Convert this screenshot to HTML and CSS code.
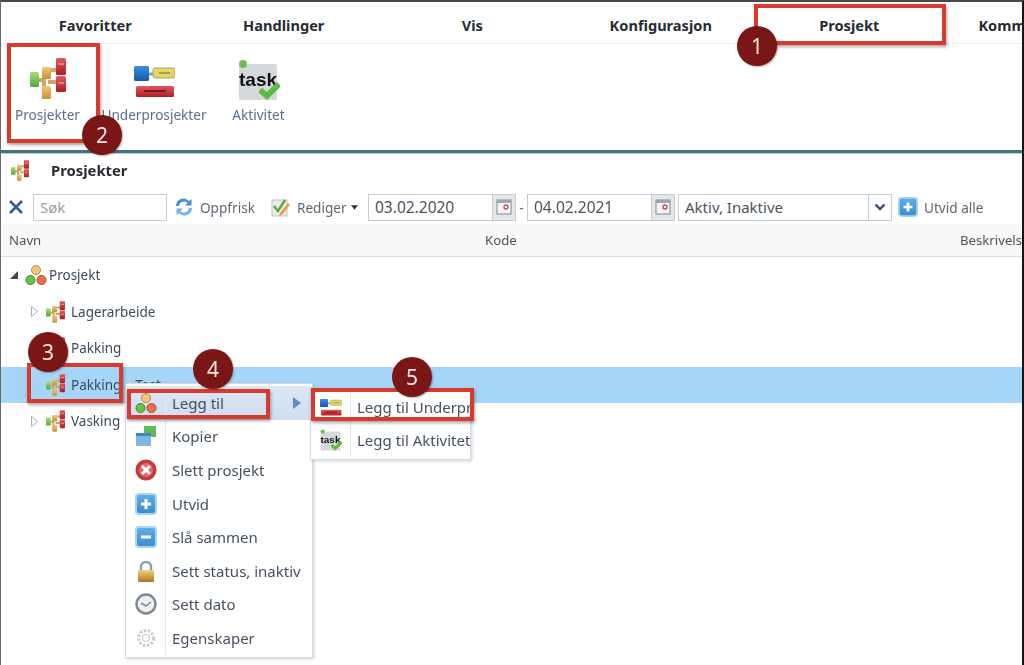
FILE: index.html
```html
<!DOCTYPE html>
<html lang="no">
<head>
<meta charset="utf-8">
<title>Prosjekter</title>
<link rel="stylesheet" href="styles.css">
</head>
<body>
<svg class="defs" aria-hidden="true">
  <defs>
    <linearGradient id="gRed" x1="0" y1="0" x2="0" y2="1"><stop offset="0" stop-color="#e2585c"/><stop offset="1" stop-color="#a91f26"/></linearGradient>
    <linearGradient id="gOr" x1="0" y1="0" x2="0" y2="1"><stop offset="0" stop-color="#f0c878"/><stop offset="1" stop-color="#c98f35"/></linearGradient>
    <linearGradient id="gGr" x1="0" y1="0" x2="0" y2="1"><stop offset="0" stop-color="#a5dc78"/><stop offset="1" stop-color="#58a83a"/></linearGradient>
    <linearGradient id="gBl" x1="0" y1="0" x2="0" y2="1"><stop offset="0" stop-color="#3d8ee0"/><stop offset="1" stop-color="#1557a8"/></linearGradient>
    <linearGradient id="gBtn" x1="0" y1="0" x2="0" y2="1"><stop offset="0" stop-color="#5fb0e6"/><stop offset="1" stop-color="#3a8ccb"/></linearGradient>
    <linearGradient id="gLock" x1="0" y1="0" x2="0" y2="1"><stop offset="0" stop-color="#f4d27a"/><stop offset="1" stop-color="#a8741f"/></linearGradient>
    <symbol id="i-proj" viewBox="0 0 36 41">
      <path d="M7 22H14M14 14V34M18 12H28M18 24H28" fill="none" stroke="#c9a76c" stroke-width="4"/>
      <rect x="0" y="14" width="9" height="15" rx="1.500" fill="url(#gGr)"/>
      <rect x="12" y="9" width="9" height="12" rx="1.500" fill="url(#gOr)"/>
      <rect x="12" y="28" width="9" height="13" rx="1.500" fill="url(#gOr)"/>
      <rect x="26" y="0" width="10" height="17" rx="1.500" fill="url(#gRed)"/>
      <rect x="26" y="18" width="10" height="16" rx="1.500" fill="url(#gRed)"/>
      <path d="M28 6H34M28 25H34" stroke="#f3c5c5" stroke-width="1.200"/>
    </symbol>
    <symbol id="i-sub" viewBox="0 0 41 32">
      <path d="M14 9H20" stroke="#8aa5b5" stroke-width="3"/>
      <rect x="0" y="1" width="15" height="15" rx="1.500" fill="url(#gBl)"/>
      <rect x="19" y="3" width="22" height="10" rx="2" fill="#e7d468" stroke="#a5a658"/>
      <path d="M25 8H36" stroke="#8b8a3a" stroke-width="1.400"/>
      <rect x="2" y="21" width="38" height="11" rx="1.500" fill="url(#gRed)"/>
      <path d="M10 26H32" stroke="#6e1215" stroke-width="1.600"/>
    </symbol>
    <symbol id="i-task" viewBox="0 0 42 40">
      <rect x="1" y="4" width="38" height="36" rx="2" fill="#d6d9dc"/>
      <circle cx="5" cy="4" r="4" fill="#6cc04a"/>
      <text x="20" y="26" text-anchor="middle" class="task-word">task</text>
      <path d="M22 30L29 36L41 24" fill="none" stroke="#5dbb3f" stroke-width="6"/>
    </symbol>
    <symbol id="i-root" viewBox="0 0 22 22">
      <circle cx="11" cy="6" r="4.500" fill="#f0c878" stroke="#b58a3a"/>
      <circle cx="5.500" cy="16" r="4.500" fill="#6cc04a" stroke="#3d8a2a"/>
      <circle cx="16.500" cy="16" r="4.500" fill="#e9704a" stroke="#b8472a"/>
    </symbol>
    <symbol id="i-copy" viewBox="0 0 22 22">
      <rect x="9" y="1" width="12" height="11" fill="#5fb85a"/>
      <rect x="1" y="8" width="15" height="13" fill="#7fb6dc"/>
      <rect x="1" y="8" width="15" height="3" fill="#3f88bd"/>
    </symbol>
    <symbol id="i-del" viewBox="0 0 22 22">
      <circle cx="11" cy="11" r="10.500" fill="#c23a3e"/>
      <circle cx="11" cy="11" r="7" fill="#e0686a"/>
      <path d="M7 7L15 15M15 7L7 15" stroke="#fff" stroke-width="3"/>
    </symbol>
    <symbol id="i-plus" viewBox="0 0 22 22">
      <rect x="1" y="1" width="20" height="20" rx="3" fill="url(#gBtn)" stroke="#a9d5f2" stroke-width="2"/>
      <path d="M11 6V16M6 11H16" stroke="#fff" stroke-width="3"/>
    </symbol>
    <symbol id="i-minus" viewBox="0 0 22 22">
      <rect x="1" y="1" width="20" height="20" rx="3" fill="url(#gBtn)" stroke="#a9d5f2" stroke-width="2"/>
      <path d="M6 11H16" stroke="#fff" stroke-width="3"/>
    </symbol>
    <symbol id="i-lock" viewBox="0 0 22 22">
      <path d="M6 11V7a5 5 0 0 1 10 0V11" fill="none" stroke="#8d9fb5" stroke-width="2.400"/>
      <rect x="3" y="10" width="16" height="12" rx="1" fill="url(#gLock)"/>
    </symbol>
    <symbol id="i-clock" viewBox="0 0 22 22">
      <circle cx="11" cy="11" r="9.500" fill="#eef1f4" stroke="#7f8791" stroke-width="2.400"/>
      <path d="M6 10L11 13L16 9" fill="none" stroke="#7f8791" stroke-width="1.500"/>
    </symbol>
    <symbol id="i-gear" viewBox="0 0 22 22">
      <circle cx="11" cy="11" r="7.500" fill="none" stroke="#c8ced4" stroke-width="3" stroke-dasharray="2.500 1.600"/>
      <circle cx="11" cy="11" r="3.500" fill="none" stroke="#c8ced4" stroke-width="1.200"/>
    </symbol>
    <symbol id="i-refresh" viewBox="0 0 20 20">
      <path d="M2 9A7.500 7.500 0 0 1 15 4L17.500 2V8.500H11L13.500 6A5 5 0 0 0 5 9Z" fill="#4a90d0"/>
      <path d="M18 11A7.500 7.500 0 0 1 5 16L2.500 18V11.500H9L6.500 14A5 5 0 0 0 15 11Z" fill="#79b4e4"/>
    </symbol>
    <symbol id="i-edit" viewBox="0 0 20 20">
      <rect x="1" y="3" width="15" height="16" fill="#e9ecea" stroke="#bfc5c2"/>
      <path d="M3 9L7 14L14 3" fill="none" stroke="#5aaa3c" stroke-width="2.400"/>
      <path d="M9 16L17 6L19 8L11 18L8 19Z" fill="#e8a03c"/>
    </symbol>
    <symbol id="i-cal" viewBox="0 0 16 16">
      <rect x="1" y="1" width="14" height="14" fill="#f2f4f6" stroke="#7f8a96"/>
      <rect x="1" y="1" width="14" height="3" fill="#9aa7b4"/>
      <circle cx="10" cy="8" r="2" fill="none" stroke="#d0454a" stroke-width="1.300"/>
    </symbol>
  </defs>
</svg>

<div class="page">
  <nav class="tabs">
    <span class="tab">Favoritter</span>
    <span class="tab">Handlinger</span>
    <span class="tab">Vis</span>
    <span class="tab">Konfigurasjon</span>
    <span class="tab">Prosjekt</span>
    <span class="tab">Kommunikasjon</span>
  </nav>

  <section class="ribbon">
    <div class="rib-item rib-proj"><svg class="rib-icon-proj"><use href="#i-proj"/></svg><span>Prosjekter</span></div>
    <div class="rib-item rib-sub"><svg class="rib-icon-sub"><use href="#i-sub"/></svg><span>Underprosjekter</span></div>
    <div class="rib-item rib-task"><svg class="rib-icon-task"><use href="#i-task"/></svg><span>Aktivitet</span></div>
  </section>

  <header class="title">
    <svg class="title-icon"><use href="#i-proj"/></svg>
    <span>Prosjekter</span>
  </header>

  <div class="toolbar">
    <svg class="close" viewBox="0 0 16 16"><path d="M2 2L14 14M14 2L2 14" stroke="#2f5b9c" stroke-width="2.600"/></svg>
    <div class="field search"><span>Søk</span></div>
    <svg class="tool-icon refresh"><use href="#i-refresh"/></svg>
    <span class="tool-text oppfrisk">Oppfrisk</span>
    <svg class="tool-icon edit"><use href="#i-edit"/></svg>
    <span class="tool-text rediger">Rediger</span>
    <svg class="caret" viewBox="0 0 8 5"><path d="M0 0H8L4 5Z" fill="#333"/></svg>
    <div class="field date"><span>03.02.2020</span><i class="trigger"><svg class="cal"><use href="#i-cal"/></svg></i></div>
    <span class="dash">-</span>
    <div class="field date"><span>04.02.2021</span><i class="trigger"><svg class="cal"><use href="#i-cal"/></svg></i></div>
    <div class="field combo"><span>Aktiv, Inaktive</span><i class="trigger"><svg class="chev" viewBox="0 0 12 8"><path d="M1.500 1.500L6 6L10.500 1.500" fill="none" stroke="#33507a" stroke-width="2.400"/></svg></i></div>
    <svg class="tool-icon expand"><use href="#i-plus"/></svg>
    <span class="tool-text">Utvid alle</span>
  </div>

  <div class="head">
    <span>Navn</span>
    <span>Kode</span>
    <span>Beskrivelse</span>
  </div>

  <ul class="tree">
    <li class="row root">
      <svg class="arrow" viewBox="0 0 8 8"><path d="M8 0V8H0Z" fill="#444"/></svg>
      <svg class="node-root"><use href="#i-root"/></svg>
      <span>Prosjekt</span>
    </li>
    <li class="row child">
      <svg class="arrow" viewBox="0 0 7 11"><path d="M.5 .5L6.500 5.500L.5 10.500Z" fill="#fff" stroke="#a8adb2"/></svg>
      <svg class="node"><use href="#i-proj"/></svg>
      <span>Lagerarbeide</span>
    </li>
    <li class="row child">
      <svg class="arrow" viewBox="0 0 7 11"><path d="M.5 .5L6.500 5.500L.5 10.500Z" fill="#fff" stroke="#a8adb2"/></svg>
      <svg class="node"><use href="#i-proj"/></svg>
      <span>Pakking</span>
    </li>
    <li class="row child selected">
      <i class="arrow"></i>
      <svg class="node"><use href="#i-proj"/></svg>
      <span>Pakking</span>
      <span class="rest">Test</span>
    </li>
    <li class="row child">
      <svg class="arrow" viewBox="0 0 7 11"><path d="M.5 .5L6.500 5.500L.5 10.500Z" fill="#fff" stroke="#a8adb2"/></svg>
      <svg class="node"><use href="#i-proj"/></svg>
      <span>Vasking</span>
    </li>
  </ul>

  <ul class="menu main-menu">
    <li class="active"><i class="cell"><svg><use href="#i-root"/></svg></i><span>Legg til</span><svg class="more" viewBox="0 0 8 12"><path d="M0 0L8 6L0 12Z" fill="#5b8fc7"/></svg></li>
    <li><i class="cell"><svg><use href="#i-copy"/></svg></i><span>Kopier</span></li>
    <li><i class="cell"><svg><use href="#i-del"/></svg></i><span>Slett prosjekt</span></li>
    <li><i class="cell"><svg><use href="#i-plus"/></svg></i><span>Utvid</span></li>
    <li><i class="cell"><svg><use href="#i-minus"/></svg></i><span>Slå sammen</span></li>
    <li><i class="cell"><svg><use href="#i-lock"/></svg></i><span>Sett status, inaktiv</span></li>
    <li><i class="cell"><svg><use href="#i-clock"/></svg></i><span>Sett dato</span></li>
    <li><i class="cell"><svg><use href="#i-gear"/></svg></i><span>Egenskaper</span></li>
  </ul>

  <ul class="menu sub-menu">
    <li><i class="cell"><svg><use href="#i-sub"/></svg></i><span>Legg til Underprosjekt</span></li>
    <li><i class="cell"><svg><use href="#i-task"/></svg></i><span>Legg til Aktivitet</span></li>
  </ul>

  <div class="mark mark-1"></div>
  <div class="mark mark-2"></div>
  <div class="mark mark-3"></div>
  <div class="mark mark-4"></div>
  <div class="mark mark-5"></div>
  <b class="badge badge-1">1</b>
  <b class="badge badge-2">2</b>
  <b class="badge badge-3">3</b>
  <b class="badge badge-4">4</b>
  <b class="badge badge-5">5</b>
</div>
</body>
</html>
```
FILE: styles.css
```css
* { box-sizing: border-box; }
html, body { margin: 0; height: 100%; background: #fff; overflow: hidden; }
body { font-family: "Noto Sans", "Open Sans", sans-serif; color: #3c4653; }
ul { list-style: none; margin: 0; padding: 0; }
i { font-style: normal; }

.defs { position: absolute; width: 0; height: 0; }
.task-word { font: 700 19px "Liberation Sans", sans-serif; fill: #111; }

.page {
  position: relative;
  width: 1024px;
  height: 665px;
  overflow: hidden;
  border-top: 2px solid #4a4a4a;
  border-left: 1px solid #6a6a6a;
  border-right: 2px solid #161616;
  filter: blur(0.6px);
}

.tabs {
  display: flex;
  height: 42px;
  border-bottom: 1px solid #eef1f3;
  background: #fff;
  white-space: nowrap;
  overflow: hidden;
}
.tab {
  flex: 0 0 188.5px;
  text-align: center;
  font-size: 14.6px;
  font-weight: 700;
  line-height: 46px;
  color: #262c33;
}

.ribbon {
  position: relative;
  display: flex;
  height: 109px;
  border-bottom: 3px solid #44707f;
  box-shadow: 0 1px 0 #b9d3dc;
}
.rib-item {
  display: flex;
  flex-direction: column;
  align-items: center;
  font-size: 13.6px;
  color: #56708f;
}
.rib-item span { position: absolute; top: 61px; white-space: nowrap; }
.rib-proj { width: 93px; }
.rib-sub { width: 120px; }
.rib-task { width: 89px; }
.rib-icon-proj { width: 36px; height: 41px; margin-top: 14px; }
.rib-icon-sub { width: 41px; height: 32px; margin-top: 21px; }
.rib-icon-task { width: 42px; height: 40px; margin-top: 16px; }

.title {
  display: flex;
  align-items: center;
  height: 37px;
  padding: 0 0 3px 10px;
  font-size: 14.8px;
  font-weight: 700;
  color: #262c33;
}
.title-icon { width: 18px; height: 21px; margin-right: 22px; }

.toolbar {
  display: flex;
  align-items: center;
  height: 34px;
  padding-left: 7px;
  font-size: 13.6px;
  color: #5d6873;
  white-space: nowrap;
}
.close { width: 16px; height: 16px; margin-right: 9px; }
.field {
  display: flex;
  align-items: center;
  height: 27px;
  border: 1px solid #c6ccd2;
  background: #fff;
  padding-left: 6px;
  font-size: 15px;
  color: #4a535d;
}
.date { font-size: 15.5px; }
.field span { flex: 1; }
.search { width: 134px; color: #98a0a8; }
.tool-icon { width: 20px; height: 20px; }
.refresh { margin-left: 7px; }
.tool-text { margin-left: 6px; }
.oppfrisk { width: 56px; }
.edit { margin-left: 15px; }
.rediger { width: 48px; }
.caret { width: 7px; height: 5px; margin: 0 10px 0 6px; }
.date { width: 148px; }
.dash { width: 11px; text-align: center; }
.combo { width: 214px; margin-left: 3px; }
.trigger {
  display: flex;
  align-items: center;
  justify-content: center;
  width: 23px;
  height: 25px;
  background: #e3e6ea;
  border-left: 1px solid #c6ccd2;
}
.combo .trigger { background: #fff; }
.cal { width: 16px; height: 16px; }
.chev { width: 12px; height: 8px; }
.expand { margin-left: 6px; }

.head {
  display: grid;
  grid-template-columns: 476px 475px 1fr;
  align-items: center;
  height: 33px;
  padding-left: 8px;
  background: #f8f8f8;
  border-bottom: 1px solid #dcdfe2;
  font-size: 13.2px;
  color: #4a535d;
  white-space: nowrap;
  overflow: hidden;
}

.tree { font-size: 13.5px; color: #3d4a5c; }
.row {
  display: flex;
  align-items: center;
  height: 36.500px;
  white-space: nowrap;
}
.root { padding-left: 9px; }
.root .arrow { width: 8px; height: 8px; margin-right: 7px; }
.node-root { width: 22px; height: 22px; margin-right: 2px; }
.child { padding-left: 30px; }
.child .arrow { width: 7px; height: 11px; margin-right: 8px; }
.node { width: 19px; height: 22px; margin-right: 6px; }
.selected { background: #a5d6f8; }
.rest { margin-left: 14px; }

.menu {
  position: absolute;
  background: #fff;
  border: 1px solid #d3dbe3;
  box-shadow: 1px 1px 3px rgba(90, 105, 120, .3);
  font-size: 15px;
  color: #465160;
  overflow: hidden;
}
.menu li { display: flex; align-items: center; white-space: nowrap; position: relative; }
.cell {
  display: flex;
  align-items: center;
  justify-content: center;
  flex: none;
  height: 100%;
  border-right: 1px solid #e6eaee;
}
.cell svg { width: 22px; height: 22px; }

.main-menu { left: 124px; top: 381px; width: 188px; height: 275px; padding-top: 2px; }
.main-menu li { height: 33.600px; }
.main-menu .cell { width: 40px; margin-right: 6px; }
.main-menu .active { background: linear-gradient(#dce7f6, #cfdef3); }
.more { position: absolute; left: 167px; top: 11px; width: 8px; height: 12px; }

.sub-menu { left: 309px; top: 387px; width: 161px; height: 71px; }
.sub-menu li { height: 33.500px; }
.sub-menu .cell { width: 40px; margin-right: 6px; }

.mark {
  position: absolute;
  border: 4px solid #d83a2e;
  box-shadow: 1px 2px 3px rgba(0, 0, 0, .35);
}
.mark-1 { left: 753px; top: 2px; width: 192px; height: 41px; }
.mark-2 { left: 6px; top: 41px; width: 93px; height: 100px; }
.mark-3 { left: 26px; top: 361px; width: 96px; height: 40px; }
.mark-4 { left: 126px; top: 387px; width: 143px; height: 30px; }
.mark-5 { left: 310px; top: 386px; width: 163px; height: 33px; }

.badge {
  position: absolute;
  display: flex;
  align-items: center;
  justify-content: center;
  width: 40px;
  height: 40px;
  border-radius: 50%;
  background: #7a1616;
  color: #f3e6e2;
  font-size: 21px;
  font-weight: 400;
  box-shadow: 1px 1px 2px rgba(0, 0, 0, .3);
}
.badge-1 { left: 736px; top: 24px; }
.badge-2 { left: 81px; top: 113px; }
.badge-3 { left: 27px; top: 330px; }
.badge-4 { left: 192px; top: 347px; }
.badge-5 { left: 391px; top: 355px; }
```
